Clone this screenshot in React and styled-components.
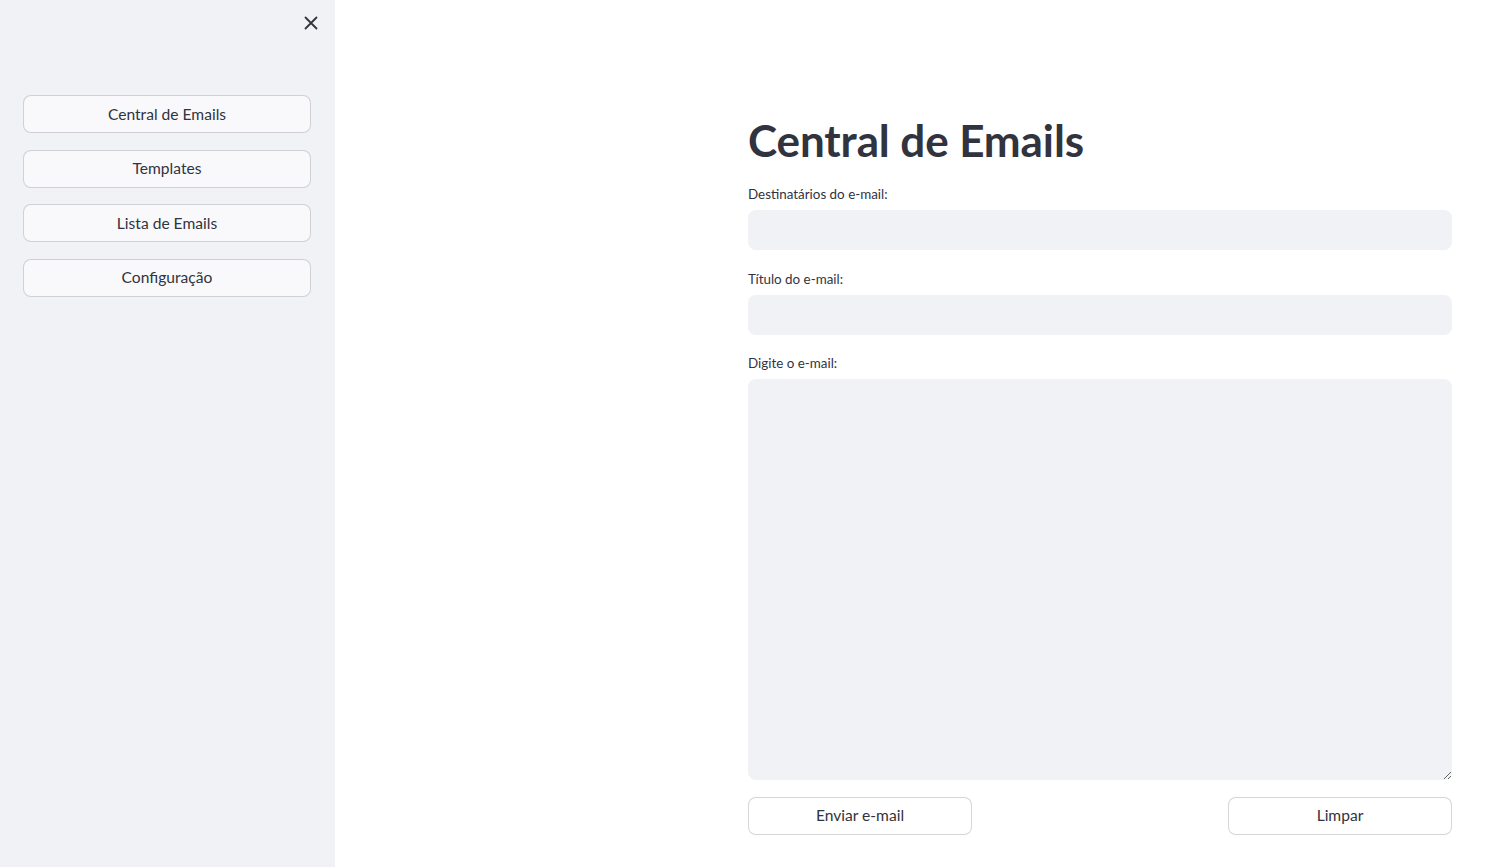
import React from 'react';
import styled, { createGlobalStyle } from 'styled-components';

const Global = createGlobalStyle`
    html, body {
        margin: 0;
        padding: 0;
        height: 100%;
    }
    body {
        font-family: "Source Sans Pro", Lato, "Noto Sans", sans-serif;
        color: #31333f;
        background: #ffffff;
    }
    #root {
        height: 100%;
    }
`;

const Page = styled.div`
    display: flex;
    height: 867px;
    overflow: hidden;
`;

const Sidebar = styled.aside`
    width: 335px;
    flex-shrink: 0;
    background: #f0f2f6;
    display: flex;
    flex-direction: column;
    box-sizing: border-box;
    padding: 11px 24px 0 23px;
`;

const SideTop = styled.div`
    display: flex;
    justify-content: flex-end;
    height: 24px;
    margin-right: -12px;
    margin-bottom: 60px;
`;

const CloseButton = styled.button`
    width: 24px;
    height: 24px;
    padding: 0;
    border: none;
    background: transparent;
    color: #31333f;
    display: flex;
    align-items: center;
    justify-content: center;
    cursor: pointer;
`;

const Nav = styled.nav`
    display: flex;
    flex-direction: column;
    gap: 16.5px;
`;

const Button = styled.button`
    box-sizing: border-box;
    width: ${(p) => p.width || '100%'};
    height: 38px;
    border: 1px solid rgba(49, 51, 63, 0.2);
    border-radius: 8px;
    background: ${(p) => (p.side ? '#f9f9fb' : '#ffffff')};
    color: #31333f;
    font-family: inherit;
    font-size: 15.6px;
    line-height: 1.6;
    cursor: pointer;
`;

const Main = styled.main`
    flex: 1;
    display: flex;
    justify-content: flex-end;
    padding: 0 47px 0 0;
`;

const Content = styled.div`
    width: 704px;
    padding-top: 112px;
`;

const Title = styled.h1`
    margin: 0 0 16px 0;
    font-size: 44px;
    font-weight: 700;
    line-height: 56px;
    letter-spacing: -0.1px;
    color: #31333f;
`;

const Field = styled.div`
    display: flex;
    flex-direction: column;
    margin-bottom: 18.5px;
`;

const Label = styled.label`
    font-size: 13.4px;
    line-height: 20px;
    color: #31333f;
    margin-bottom: 6px;
`;

const Input = styled.input`
    box-sizing: border-box;
    height: 40px;
    border: none;
    border-radius: 8px;
    background: #f0f2f6;
    outline: none;
    padding: 0 12px;
    font-family: inherit;
    font-size: 16px;
`;

const TextArea = styled.textarea`
    box-sizing: border-box;
    height: 401px;
    border: none;
    border-radius: 8px;
    background: #f0f2f6;
    outline: none;
    padding: 12px;
    font-family: inherit;
    font-size: 16px;
    resize: vertical;
`;

const Actions = styled.div`
    display: flex;
    justify-content: space-between;
    margin-top: -2px;
`;

const pages = ['Central de Emails', 'Templates', 'Lista de Emails', 'Configuração'];

export default function App() {
    return (
        <>
            <Global />
            <Page>
                <Sidebar>
                    <SideTop>
                        <CloseButton aria-label="Fechar">
                            <svg width="14" height="14" viewBox="0 0 14 14">
                                <path d="M1.5 1.5 L12.5 12.5 M12.5 1.5 L1.5 12.5" stroke="#31333f" strokeWidth="1.8" strokeLinecap="round" />
                            </svg>
                        </CloseButton>
                    </SideTop>
                    <Nav>
                        {pages.map((p) => (
                            <Button side key={p}>{p}</Button>
                        ))}
                    </Nav>
                </Sidebar>
                <Main>
                    <Content>
                        <Title>Central de Emails</Title>
                        <Field>
                            <Label>Destinatários do e-mail:</Label>
                            <Input />
                        </Field>
                        <Field>
                            <Label>Título do e-mail:</Label>
                            <Input />
                        </Field>
                        <Field>
                            <Label>Digite o e-mail:</Label>
                            <TextArea />
                        </Field>
                        <Actions>
                            <Button width="224px">Enviar e-mail</Button>
                            <Button width="224px">Limpar</Button>
                        </Actions>
                    </Content>
                </Main>
            </Page>
        </>
    );
}
